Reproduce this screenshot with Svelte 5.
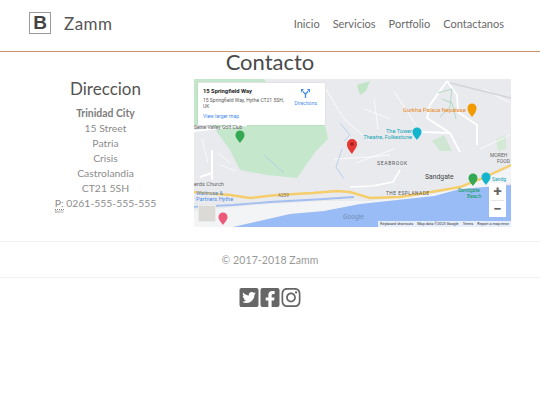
<script>
	const links = ['Inicio', 'Servicios', 'Portfolio', 'Contactanos'];
	const address = ['15 Street', 'Patria', 'Crisis', 'Castrolandia', 'CT21 5SH'];
</script>

<header class="topbar">
	<a class="brand" href="#top">
		<span class="logo">B</span>
		<span class="brand-name">Zamm</span>
	</a>
	<nav>
		{#each links as link}
			<a href="#top">{link}</a>
		{/each}
	</nav>
</header>

<main>
	<h1>Contacto</h1>
	<div class="columns">
		<section class="address">
			<h2>Direccion</h2>
			<strong>Trinidad City</strong>
			{#each address as line}
				<div>{line}</div>
			{/each}
			<div class="phone"><abbr>P:<small>BxID</small></abbr> 0261-555-555-555</div>
		</section>

		<div class="map">
			<svg viewBox="0 0 317 148" width="317" height="148">
				<rect width="317" height="148" fill="#e9eaed" />
				<!-- parks -->
				<path d="M0 0H70L72 3H4V46H0Z" fill="#c4e6cb" />
				<path d="M18 46H131L134 60 122 72 112 86 103 99 73 96 46 91 36 71 28 60Z" fill="#c5e7cc" />
				<path d="M163 6L176 2 172 12 166 16Z" fill="#bfe4c6" />
				<path d="M3 143H22V148H3Z" fill="#c4e6cb" />
				<path d="M302 60L312 56 312 70 304 72Z" fill="#d4e9d5" />
				<path d="M238 62L250 56 258 72 246 72Z" fill="#cfe6d2" />
				<!-- shore and sea -->
				<path d="M0 132L60 126 130 122 176 122 240 115 266 108 290 100 317 88V104L266 112 240 118 166 126 130 132 96 135 39 148H0Z" fill="#f3f4f6" />
				<path d="M39 148L96 135 130 132 166 125 240 117 266 110 317 106V148Z" fill="#9abcf6" />
				<!-- roads -->
				<g fill="none" stroke="#fff" stroke-width="1.4">
					<path d="M18 71V101" stroke-width="2" />
					<path d="M6 98L18 94" stroke-width="2" />
					<path d="M0 52L53 46" stroke-width="2" />
					<path d="M253 2L236 26 233 39 256 54 266 73" stroke-width="1.8" />
					<path d="M253 2L263 16 264 33 283 46 283 66" stroke-width="1.8" />
					<path d="M228 53L256 54" stroke-width="1.8" />
					<path d="M206 91L199 103 178 107 156 108" stroke-width="1.6" />
					<path d="M132 10L150 40 176 62M200 12L222 46M140 80L176 78 196 76" stroke-width="0.8" />
					<path d="M290 10L316 24M286 70L316 56" stroke-width="0.8" />
					<path d="M24 74L36 84M26 86L42 92M8 60L14 84M170 30L196 40M180 20L184 50M162 84L200 70" stroke-width="0.7" />
				</g>
				<path d="M256 4L317 19" fill="none" stroke="#d2d4d8" stroke-width="1.5" />
				<g fill="none" stroke="#a5d6b5" stroke-width="0.8">
					<path d="M244 14L258 10 256 28 246 38M248 20L258 24 262 40" />
				</g>
				<!-- river -->
				<path d="M-2 128L39 126 76 123 130 120 160 118" fill="none" stroke="#a3bff0" stroke-width="1.8" />
				<path d="M146 44L156 56 150 62M148 70L142 88 150 100M70 76L90 94" fill="none" stroke="#a9c4ee" stroke-width="0.7" />
				<!-- A259 -->
				<path d="M-2 113L36 116 56 119 83 116 119 114 143 112 156 113 176 119 206 118 243 112 266 108 289 99 317 86" fill="none" stroke="#f5cd6b" stroke-width="2.4" />
				<!-- labels -->
				<g font-family="Roboto, sans-serif">
					<text x="2" y="116" font-size="5.6" fill="#1a73e8" opacity="0.8">Waitrose &amp;</text>
					<text x="2" y="122" font-size="5.6" fill="#1a73e8" opacity="0.8">Partners Hythe</text>
					<text x="0" y="107" font-size="5.6" fill="#666">erds Church</text>
					<text x="0" y="50" font-size="5" fill="#666">Seine Valley Golf Club</text>
					<text x="183" y="86" font-size="5" letter-spacing="0.7" fill="#555">SEABROOK</text>
					<text x="231" y="100" font-size="6.8" fill="#444">Sandgate</text>
					<text x="192" y="116" font-size="4.8" letter-spacing="0.5" fill="#555">THE ESPLANADE</text>
					<text x="209" y="33" font-size="5.8" fill="#e8891c">Gurkha Palace Nepalese</text>
					<text x="218" y="54" font-size="5.6" fill="#12a5b5" text-anchor="end">The Tower</text>
					<text x="218" y="60" font-size="5.6" fill="#12a5b5" text-anchor="end">Theatre, Folkestone</text>
					<text x="264" y="113" font-size="5.2" fill="#0f9d58">Sandgate</text>
					<text x="273" y="119" font-size="5.2" fill="#0f9d58">Beach</text>
					<text x="296" y="78" font-size="5" fill="#666">MOREH</text>
					<text x="303" y="84" font-size="5" fill="#666">FOOD</text>
					<text x="84" y="118" font-size="4.6" fill="#777">A259</text>
					<text x="149" y="140" font-size="6.6" fill="#6f8fb8">Google</text>
					<text x="298" y="102" font-size="5" fill="#12a5b5">Sandg</text>
				</g>
				<!-- pins -->
				<path d="M46 64C43 60 41.500 58.500 41.500 56A4.500 4.500 0 0 1 50.500 56C50.500 58.500 49 60 46 64Z" fill="#34a853" />
				<path d="M158 75C154 70 153 68 153 65A5 5 0 0 1 163 65C163 68 161 70 158 75Z" fill="#e53935" />
				<circle cx="158" cy="65" r="1.800" fill="#a11c1c" />
				<path d="M278 38C275 34 273.500 32.500 273.500 29A4.500 4.500 0 0 1 282.500 29C282.500 32.500 281 34 278 38Z" fill="#f29900" />
				<path d="M223 61C220 57 218.500 55.500 218.500 53A4.500 4.500 0 0 1 227.500 53C227.500 55.500 226 57 223 61Z" fill="#12b5cb" />
				<path d="M279 107C276 103 274.500 101.500 274.500 99A4.500 4.500 0 0 1 283.500 99C283.500 101.500 282 103 279 107Z" fill="#34a853" />
				<path d="M292 106C289 102 287.500 100.500 287.500 98A4.500 4.500 0 0 1 296.500 98C296.500 100.500 295 102 292 106Z" fill="#12b5cb" />
				<path d="M29 146C26 142 24.500 140.500 24.500 138A4.500 4.500 0 0 1 33.500 138C33.500 140.500 32 142 29 146Z" fill="#ec5a7a" />
			</svg>

			<div class="infocard">
				<div class="card-main">
					<b>15 Springfield Way</b>
					<p>15 Springfield Way, Hythe CT21 5SH, UK</p>
					<a href="#top">View larger map</a>
				</div>
				<div class="directions">
					<svg viewBox="0 0 12 12" width="9" height="9">
						<path d="M6 12V7L2.600 3.200M6 7L9.400 3" fill="none" stroke="#1a73e8" stroke-width="1.800" />
						<path d="M0 5V0H4ZM12 5V0H8Z" fill="#1a73e8" />
					</svg>
					<span>Directions</span>
				</div>
			</div>

			<div class="pegman"></div>

			<div class="zoom">
				<span>+</span>
				<i></i>
				<span>−</span>
			</div>

			<div class="attribution">
				<span>Keyboard shortcuts</span>
				<span>Map data ©2023 Google</span>
				<span>Terms</span>
				<span>Report a map error</span>
			</div>
		</div>
	</div>
</main>

<footer>
	<p>© 2017-2018 Zamm</p>
	<div class="social">
		<svg viewBox="0 32 448 448"><path d="M400 32H48C21.500 32 0 53.500 0 80v352c0 26.500 21.500 48 48 48h352c26.500 0 48-21.500 48-48V80c0-26.500-21.500-48-48-48zm-48.900 158.800c.2 2.800.2 5.700.2 8.500 0 86.700-66 186.600-186.600 186.600-37.200 0-71.700-10.800-100.700-29.400 5.300.6 10.400.8 15.800.8 30.700 0 58.900-10.400 81.400-28-28.800-.6-53-19.500-61.300-45.500 10.100 1.500 19.200 1.500 29.600-1.200-30-6.100-52.500-32.500-52.500-64.400v-.8c8.700 4.900 18.900 7.900 29.600 8.300a65.447 65.447 0 0 1-29.200-54.600c0-12.200 3.200-23.400 8.900-33.100 32.300 39.800 80.800 65.800 135.200 68.600-9.300-44.500 24-80.600 64-80.600 18.900 0 35.900 7.900 47.900 20.700 14.800-2.800 29-8.300 41.600-15.800-4.900 15.200-15.200 28-28.800 36.100 13.200-1.400 26-5.100 37.800-10.200-8.900 13.100-20.100 24.700-32.900 34z" /></svg>
		<svg viewBox="0 32 448 448"><path d="M400 32H48A48 48 0 0 0 0 80v352a48 48 0 0 0 48 48h137.250V327.690h-63V256h63v-54.640c0-62.150 37-96.480 93.670-96.480 27.140 0 55.520 4.840 55.520 4.840v61h-31.270c-30.810 0-40.420 19.120-40.420 38.730V256h68.780l-11 71.690h-57.780V480H400a48 48 0 0 0 48-48V80a48 48 0 0 0-48-48z" /></svg>
		<svg viewBox="0 32 448 448"><path d="M224.100 141c-63.600 0-114.900 51.300-114.900 114.900s51.300 114.900 114.900 114.900S339 319.500 339 255.900 287.700 141 224.100 141zm0 189.600c-41.100 0-74.700-33.500-74.700-74.700s33.500-74.700 74.700-74.700 74.700 33.500 74.700 74.700-33.600 74.700-74.700 74.700zm146.400-194.300c0 14.900-12 26.800-26.800 26.800-14.900 0-26.800-12-26.800-26.800s12-26.800 26.800-26.800 26.800 12 26.800 26.800zm76.100 27.200c-1.700-35.900-9.900-67.700-36.200-93.900-26.200-26.200-58-34.400-93.900-36.200-37-2.100-147.900-2.100-184.900 0-35.800 1.700-67.600 9.900-93.900 36.100s-34.400 58-36.200 93.900c-2.100 37-2.100 147.900 0 184.900 1.700 35.900 9.900 67.700 36.200 93.900s58 34.400 93.900 36.200c37 2.100 147.900 2.100 184.900 0 35.900-1.700 67.700-9.900 93.900-36.200 26.200-26.200 34.400-58 36.200-93.900 2.100-37 2.100-147.800 0-184.800zM398.800 388c-7.800 19.600-22.900 34.700-42.600 42.600-29.500 11.700-99.500 9-132.100 9s-102.700 2.600-132.100-9c-19.600-7.800-34.700-22.900-42.600-42.600-11.700-29.500-9-99.500-9-132.100s-2.600-102.700 9-132.100c7.800-19.600 22.900-34.700 42.600-42.600 29.500-11.700 99.500-9 132.100-9s102.700-2.600 132.100 9c19.600 7.800 34.700 22.900 42.600 42.600 11.700 29.500 9 99.500 9 132.100s2.700 102.700-9 132.100z" /></svg>
	</div>
</footer>

<style>
	:global(body) {
		background: #fff;
		font-family: 'Lato', 'Open Sans', sans-serif;
		color: #777;
	}
	a {
		text-decoration: none;
		color: inherit;
	}
	.topbar {
		display: flex;
		align-items: center;
		justify-content: space-between;
		height: 46px;
		padding: 0 36px 5px 29px;
		border-bottom: 1px solid #c8906c;
		box-sizing: content-box;
	}
	.brand {
		display: flex;
		align-items: center;
		gap: 13px;
	}
	.logo {
		display: flex;
		align-items: center;
		justify-content: center;
		box-sizing: border-box;
		width: 22px;
		height: 22px;
		border: 1px solid #999;
		font: 700 19px 'Liberation Sans', sans-serif;
		color: #444;
	}
	.brand-name {
		font-size: 17px;
		letter-spacing: 0.5px;
		color: #555;
	}
	nav {
		display: flex;
		gap: 13px;
		font-size: 11px;
		color: #6a6a6a;
	}
	main {
		padding: 0 29px;
	}
	h1 {
		margin: 0;
		height: 27px;
		font-size: 22px;
		line-height: 20px;
		font-weight: 400;
		text-align: center;
		color: #4a4a4a;
	}
	.columns {
		display: grid;
		grid-template-columns: 153px 317px;
		gap: 12px;
	}
	.address {
		font-size: 10.4px;
		line-height: 15px;
		text-align: center;
		color: #8c8c8c;
	}
	.address h2 {
		margin: 0 0 7px;
		font-size: 17px;
		line-height: 20px;
		font-weight: 400;
		color: #555;
	}
	.address strong {
		display: block;
		font-weight: 700;
		color: #7c7c7c;
	}
	abbr {
		position: relative;
		border-bottom: 1px dotted #888;
	}
	abbr small {
		position: absolute;
		left: 0;
		top: 13px;
		font-size: 4px;
		line-height: 4px;
	}
	.map {
		position: relative;
		width: 317px;
		height: 148px;
		overflow: hidden;
	}
	.map > svg {
		display: block;
	}
	.infocard {
		position: absolute;
		left: 4px;
		top: 4px;
		display: flex;
		justify-content: space-between;
		box-sizing: border-box;
		width: 127px;
		height: 42px;
		padding: 5px 5px 0 5px;
		background: #fff;
		font-family: Roboto, sans-serif;
		box-shadow: 0 0 1px rgba(0, 0, 0, 0.2);
	}
	.card-main {
		width: 84px;
	}
	.card-main b {
		display: block;
		font-size: 5.8px;
		line-height: 7px;
		color: #222;
	}
	.card-main p {
		width: 84px;
		margin: 2px 0 4px;
		font-size: 5px;
		line-height: 6px;
		color: #5b5b5b;
	}
	.card-main a {
		display: block;
		font-size: 5px;
		line-height: 6px;
		color: #1a73e8;
		opacity: 0.85;
	}
	.directions {
		display: flex;
		flex-direction: column;
		align-items: center;
		gap: 2px;
		padding: 1px 3px 0 0;
		font-size: 5px;
		color: #1a73e8;
		opacity: 0.8;
	}
	.pegman {
		position: absolute;
		left: 4px;
		top: 126px;
		width: 18px;
		height: 17px;
		background: #dcdad6;
		border: 1px solid #eceae6;
		box-sizing: border-box;
	}
	.zoom {
		position: absolute;
		right: 5px;
		top: 104px;
		display: flex;
		flex-direction: column;
		align-items: center;
		width: 17px;
		height: 34px;
		background: #fff;
		font: 700 15px/16.5px Roboto, sans-serif;
		color: #666;
	}
	.zoom i {
		width: 13px;
		height: 1px;
		background: #e6e6e6;
	}
	.attribution {
		position: absolute;
		right: 0;
		bottom: 0;
		display: flex;
		gap: 4px;
		height: 6px;
		padding: 0 2px;
		background: rgba(255, 255, 255, 0.75);
		font: 3.8px/6px Roboto, sans-serif;
		color: #333;
		white-space: nowrap;
	}
	footer {
		margin-top: 14px;
		text-align: center;
	}
	footer p {
		margin: 0;
		height: 35px;
		border-top: 1px solid #f1f1f1;
		border-bottom: 1px solid #f1f1f1;
		font-size: 10.5px;
		letter-spacing: 0.1px;
		line-height: 36px;
		color: #999;
	}
	.social {
		display: flex;
		justify-content: center;
		gap: 1px;
		padding-top: 10px;
	}
	.social svg {
		width: 20px;
		height: 19px;
		fill: #666;
	}
</style>
